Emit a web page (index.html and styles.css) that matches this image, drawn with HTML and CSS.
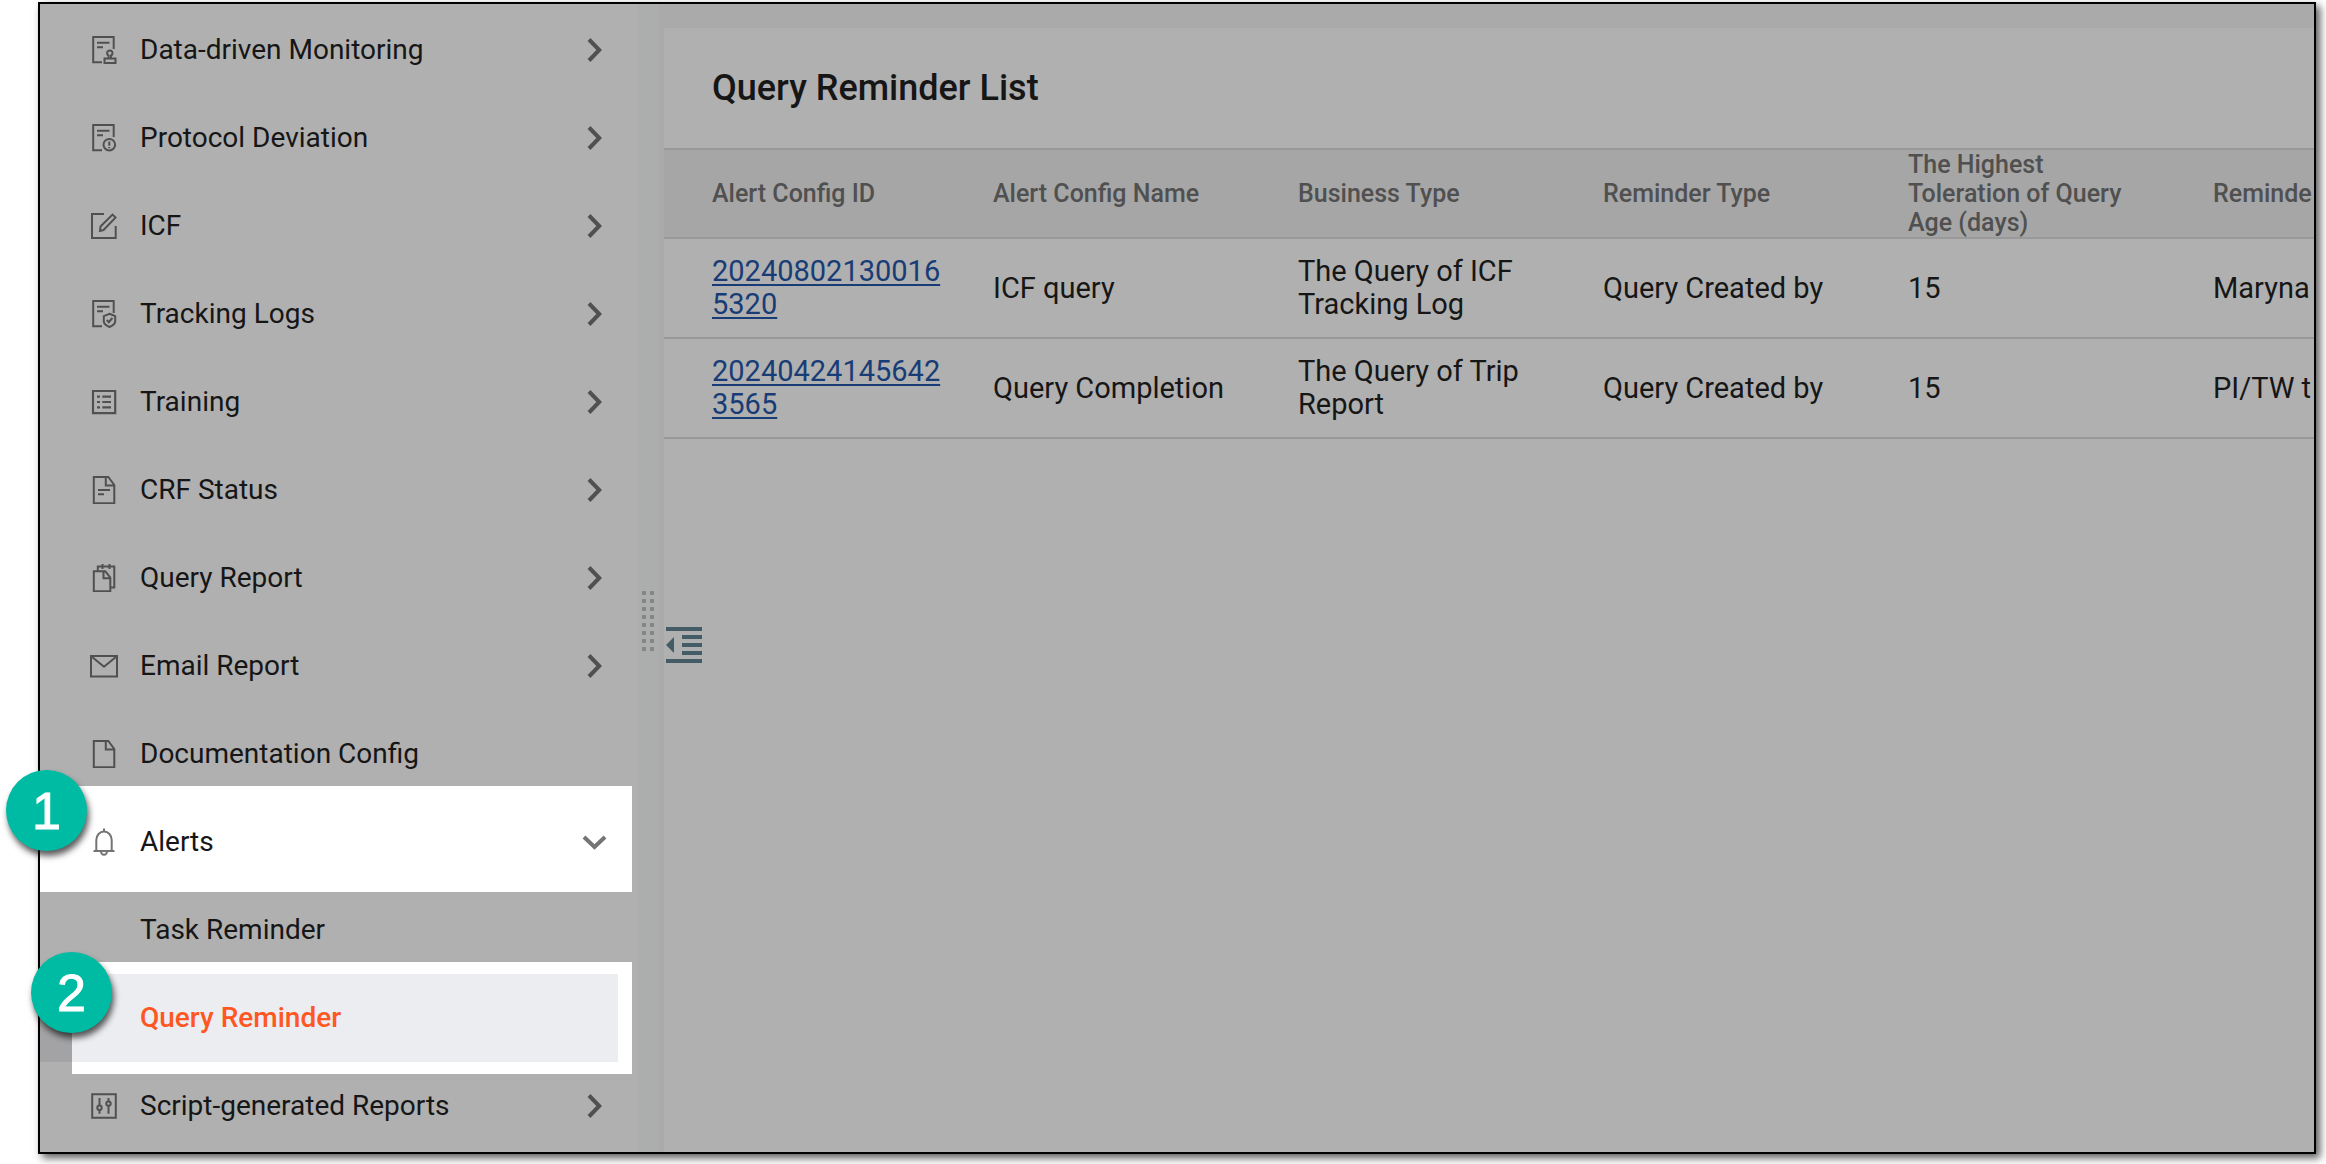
FILE: index.html
```html
<!DOCTYPE html>
<html lang="en">
<head>
<meta charset="utf-8">
<meta name="viewport" content="width=device-width, initial-scale=1">
<title>Query Reminder List</title>
<link rel="stylesheet" href="styles.css">
</head>
<body>
<svg class="sprite" aria-hidden="true">
  <symbol id="page" viewBox="0 0 28 28"><path d="M12 26.2H3.2V1h20.5v12M7 6.8h12.5M7 11.2h6"/></symbol>
  <symbol id="file" viewBox="0 0 28 28"><path d="M3.8 1h14.5l6 8v18.2H3.8zM15.8 1v8.4h8.4"/></symbol>
  <symbol id="right" viewBox="0 0 28 28"><path d="M9 3.500 19.200 14 9 24.500"/></symbol>
</svg>
<div class="frame">
  <nav class="sidebar" aria-label="Modules">
    <ul class="menu">
      <li class="item"><button class="row" type="button">
        <svg class="icon" viewBox="0 0 28 28"><use href="#page"/><path d="M18.600 22.300v-2.800a2.700 2.700 0 1 1 2.400 0v2.800M14.500 22.400h11v4.600h-11z"/></svg>
        <span class="label">Data-driven Monitoring</span><svg class="chevron"><use href="#right"/></svg></button></li>
      <li class="item"><button class="row" type="button">
        <svg class="icon" viewBox="0 0 28 28"><use href="#page"/><circle cx="19.300" cy="20.700" r="5.800"/><path d="M19.300 17.500v4.200M19.300 22.900v1.400"/></svg>
        <span class="label">Protocol Deviation</span><svg class="chevron"><use href="#right"/></svg></button></li>
      <li class="item"><button class="row" type="button">
        <svg class="icon" viewBox="0 0 28 28"><path d="M14 2H2v24h23.700V14M10 19l.500-4.500L22.500 2.600l3 3L13.500 18z"/></svg>
        <span class="label">ICF</span><svg class="chevron"><use href="#right"/></svg></button></li>
      <li class="item"><button class="row" type="button">
        <svg class="icon" viewBox="0 0 28 28"><use href="#page"/><path d="m19.500 13.800 5.700 2.300v5.200c0 2.600-2.600 4.500-5.700 5.700-3.100-1.200-5.700-3.100-5.700-5.700v-5.200zM16.800 20l2 2.200 3.600-4.200"/></svg>
        <span class="label">Tracking Logs</span><svg class="chevron"><use href="#right"/></svg></button></li>
      <li class="item"><button class="row" type="button">
        <svg class="icon" viewBox="0 0 28 28"><path d="M3 3h22.200v22.200H3zM7 8.700h3M12.300 8.700H21M7 14h3M12.300 14H21M7 19.300h3M12.300 19.300H21" stroke-width="2.200"/></svg>
        <span class="label">Training</span><svg class="chevron"><use href="#right"/></svg></button></li>
      <li class="item"><button class="row" type="button">
        <svg class="icon" viewBox="0 0 28 28"><use href="#file"/><path d="M8 14h12M8 18.200h6"/></svg>
        <span class="label">CRF Status</span><svg class="chevron"><use href="#right"/></svg></button></li>
      <li class="item"><button class="row" type="button">
        <svg class="icon" viewBox="0 0 28 28"><path d="M3.800 7.200h11.500l5 6.500v13.500H3.800zM13.500 7.200v7h6.800M7.800 7V2.500h16.500v21h-3.600M12.500 0v5M19.500 0v5"/></svg>
        <span class="label">Query Report</span><svg class="chevron"><use href="#right"/></svg></button></li>
      <li class="item"><button class="row" type="button">
        <svg class="icon" viewBox="0 0 28 28"><path d="M1 4h26v20.500H1zM1.500 4.500 14 14.800 26.500 4.500"/></svg>
        <span class="label">Email Report</span><svg class="chevron"><use href="#right"/></svg></button></li>
      <li class="item"><a class="row" href="#documentation">
        <svg class="icon" viewBox="0 0 28 28"><use href="#file"/></svg>
        <span class="label">Documentation Config</span></a></li>
      <li class="item spot spot-alerts"><button class="row" type="button" aria-expanded="true">
        <svg class="icon" viewBox="0 0 28 28"><path d="M6.300 23V12a7.700 8.500 0 0 1 15.400 0v11M3.500 23h21M14 .400v3M11 23.500a3 3.200 0 0 0 6 0"/></svg>
        <span class="label">Alerts</span><svg class="chevron" viewBox="0 0 28 28"><path d="m4 9 10.500 10L25 9"/></svg></button>
        <span class="badge badge-one">1</span></li>
      <li class="item"><a class="row sub" href="#task"><span class="label">Task Reminder</span></a></li>
      <li class="item spot spot-query"><a class="row sub current" href="#query" aria-current="page"><span class="label">Query Reminder</span></a>
        <span class="badge badge-two">2</span></li>
      <li class="item"><button class="row" type="button">
        <svg class="icon" viewBox="0 0 28 28"><path d="M2.200 2.200h23.600v23.600H2.200zM9.500 6v7.500M9.500 17.800v4M18.500 6v3.500M18.500 13.800v8"/><circle cx="9.500" cy="15.700" r="2.200"/><circle cx="18.500" cy="11.600" r="2.200"/></svg>
        <span class="label">Script-generated Reports</span><svg class="chevron"><use href="#right"/></svg></button></li>
    </ul>
  </nav>
  <div class="splitter">
    <svg class="grip" width="12" height="60" aria-hidden="true"><path d="M2 0v60M10 0v60"/></svg>
  </div>
  <main class="content">
    <section class="panel">
      <h1 class="title">Query Reminder List</h1>
      <table class="list">
        <colgroup><col class="col-id"><col class="col"><col class="col"><col class="col"><col class="col"><col class="col"></colgroup>
        <thead>
          <tr><th>Alert Config ID</th><th>Alert Config Name</th><th>Business Type</th><th>Reminder Type</th><th>The Highest Toleration of Query Age (days)</th><th>Reminde</th></tr>
        </thead>
        <tbody>
          <tr><td><a class="link" href="#r1">202408021300165320</a></td><td>ICF query</td><td>The Query of ICF Tracking Log</td><td>Query Created by</td><td>15</td><td>Maryna</td></tr>
          <tr><td><a class="link" href="#r2">202404241456423565</a></td><td>Query Completion</td><td>The Query of Trip Report</td><td>Query Created by</td><td>15</td><td>PI/TW t</td></tr>
        </tbody>
      </table>
    </section>
    <button class="collapse" type="button" aria-label="Collapse menu">
      <svg width="36" height="36" viewBox="0 0 36 36"><path d="M0 0h36v4H0zM16 8h20v4H16zM16 16h20v4H16zM16 24h20v4H16zM0 32h36v4H0zM0 18l8-8v16z"/></svg>
    </button>
  </main>
</div>
</body>
</html>
```
FILE: styles.css
```css
* {
  box-sizing: border-box;
}

body {
  margin: 0;
  min-height: 100vh;
  padding: 2px 10px 10px 38px;
  display: flex;
  background: #fff;
  color: #161616;
  font-family: Roboto, "Liberation Sans", sans-serif;
  font-size: 28px;
  line-height: 33px;
}

.sprite {
  position: absolute;
  width: 0;
  height: 0;
}

.frame {
  flex: 1;
  min-width: 0;
  display: flex;
  border: 2px solid #000;
  background: #b0b0b0;
  box-shadow: 4px 4px 8px rgba(0, 0, 0, 0.65);
}

/* Sidebar */
.sidebar {
  flex: none;
  width: 598px;
  padding: 2px 20px 0 0;
}

.menu {
  margin: 0;
  padding: 0;
  list-style: none;
}

.item {
  position: relative;
}

.row {
  position: relative;
  display: flex;
  align-items: center;
  gap: 22px;
  width: 100%;
  height: 88px;
  padding: 0 10px 0 50px;
  border: 0;
  background: none;
  color: inherit;
  font: inherit;
  text-align: left;
  text-decoration: none;
}

.sub {
  padding-left: 100px;
}

.label {
  flex: 1;
  padding-bottom: 2px;
}

.icon,
.chevron {
  flex: none;
  width: 28px;
  height: 28px;
  fill: none;
  stroke: #505050;
  stroke-width: 2;
}

.chevron {
  stroke-width: 4;
}

/* Highlighted steps */
.spot {
  z-index: 1;
}

.spot::before {
  content: "";
  position: absolute;
  background: #fff;
}

.spot-alerts::before {
  inset: -12px -14px -6px 0;
}

.spot-query {
  background: #a3a3a5;
}

.spot-query::before {
  inset: -12px -14px -12px 32px;
}

.spot .icon,
.spot .chevron {
  stroke: #747474;
}

.current {
  background: linear-gradient(#ecedf1, #ecedf1) 32px 0 no-repeat;
  color: #ff5722;
  font-weight: 500;
}

.badge {
  position: absolute;
  width: 81px;
  height: 81px;
  border-radius: 50%;
  background: #00bba3;
  box-shadow: 2px 5px 6px rgba(0, 0, 0, 0.65);
  color: #fff;
  font: 52px/82px "Liberation Sans", Arial, sans-serif;
  -webkit-text-stroke: 1px #fff;
  text-align: center;
}

.badge-one {
  top: -28px;
  left: -34px;
}

.badge-two {
  top: -22px;
  left: -9px;
}

/* Splitter */
.splitter {
  flex: none;
  width: 20px;
  padding: 587px 4px 0;
  background: #abaeac;
}

.grip {
  display: block;
  fill: none;
  stroke: #868686;
  stroke-width: 4;
  stroke-dasharray: 4 4;
}

/* Content */
.content {
  position: relative;
  flex: 1;
  min-width: 0;
  overflow: hidden;
  display: flex;
  padding: 24px 0 0 6px;
  background: #aaa;
}

.panel {
  flex: 1;
  min-width: 0;
  background: #b0b0b0;
}

.title {
  margin: 0;
  padding: 40px 48px;
  font-size: 36px;
  font-weight: 500;
  line-height: 40px;
}

.list {
  width: 1822px;
  table-layout: fixed;
  border-collapse: separate;
  border-spacing: 0;
}

.col-id {
  width: 297px;
}

.col {
  width: 305px;
}

.list th,
.list td {
  padding: 0 32px;
  border-bottom: 2px solid #999;
  text-align: left;
  vertical-align: middle;
}

.list th {
  height: 91px;
  border-top: 2px solid #999;
  background: #a6a6a6;
  color: #505050;
  font-size: 25px;
  font-weight: 500;
  line-height: 29px;
}

.list td {
  height: 100px;
  font-size: 29px;
}

.list th:first-child,
.list td:first-child {
  padding: 0 16px 0 48px;
}

.link {
  color: #183c76;
  text-decoration: underline;
  text-decoration-thickness: 2px;
  text-underline-offset: 3px;
  word-break: break-all;
}

.collapse {
  position: absolute;
  top: 623px;
  left: 8px;
  padding: 0;
  border: 0;
  background: none;
}

.collapse svg {
  display: block;
  fill: #435c66;
}
```
